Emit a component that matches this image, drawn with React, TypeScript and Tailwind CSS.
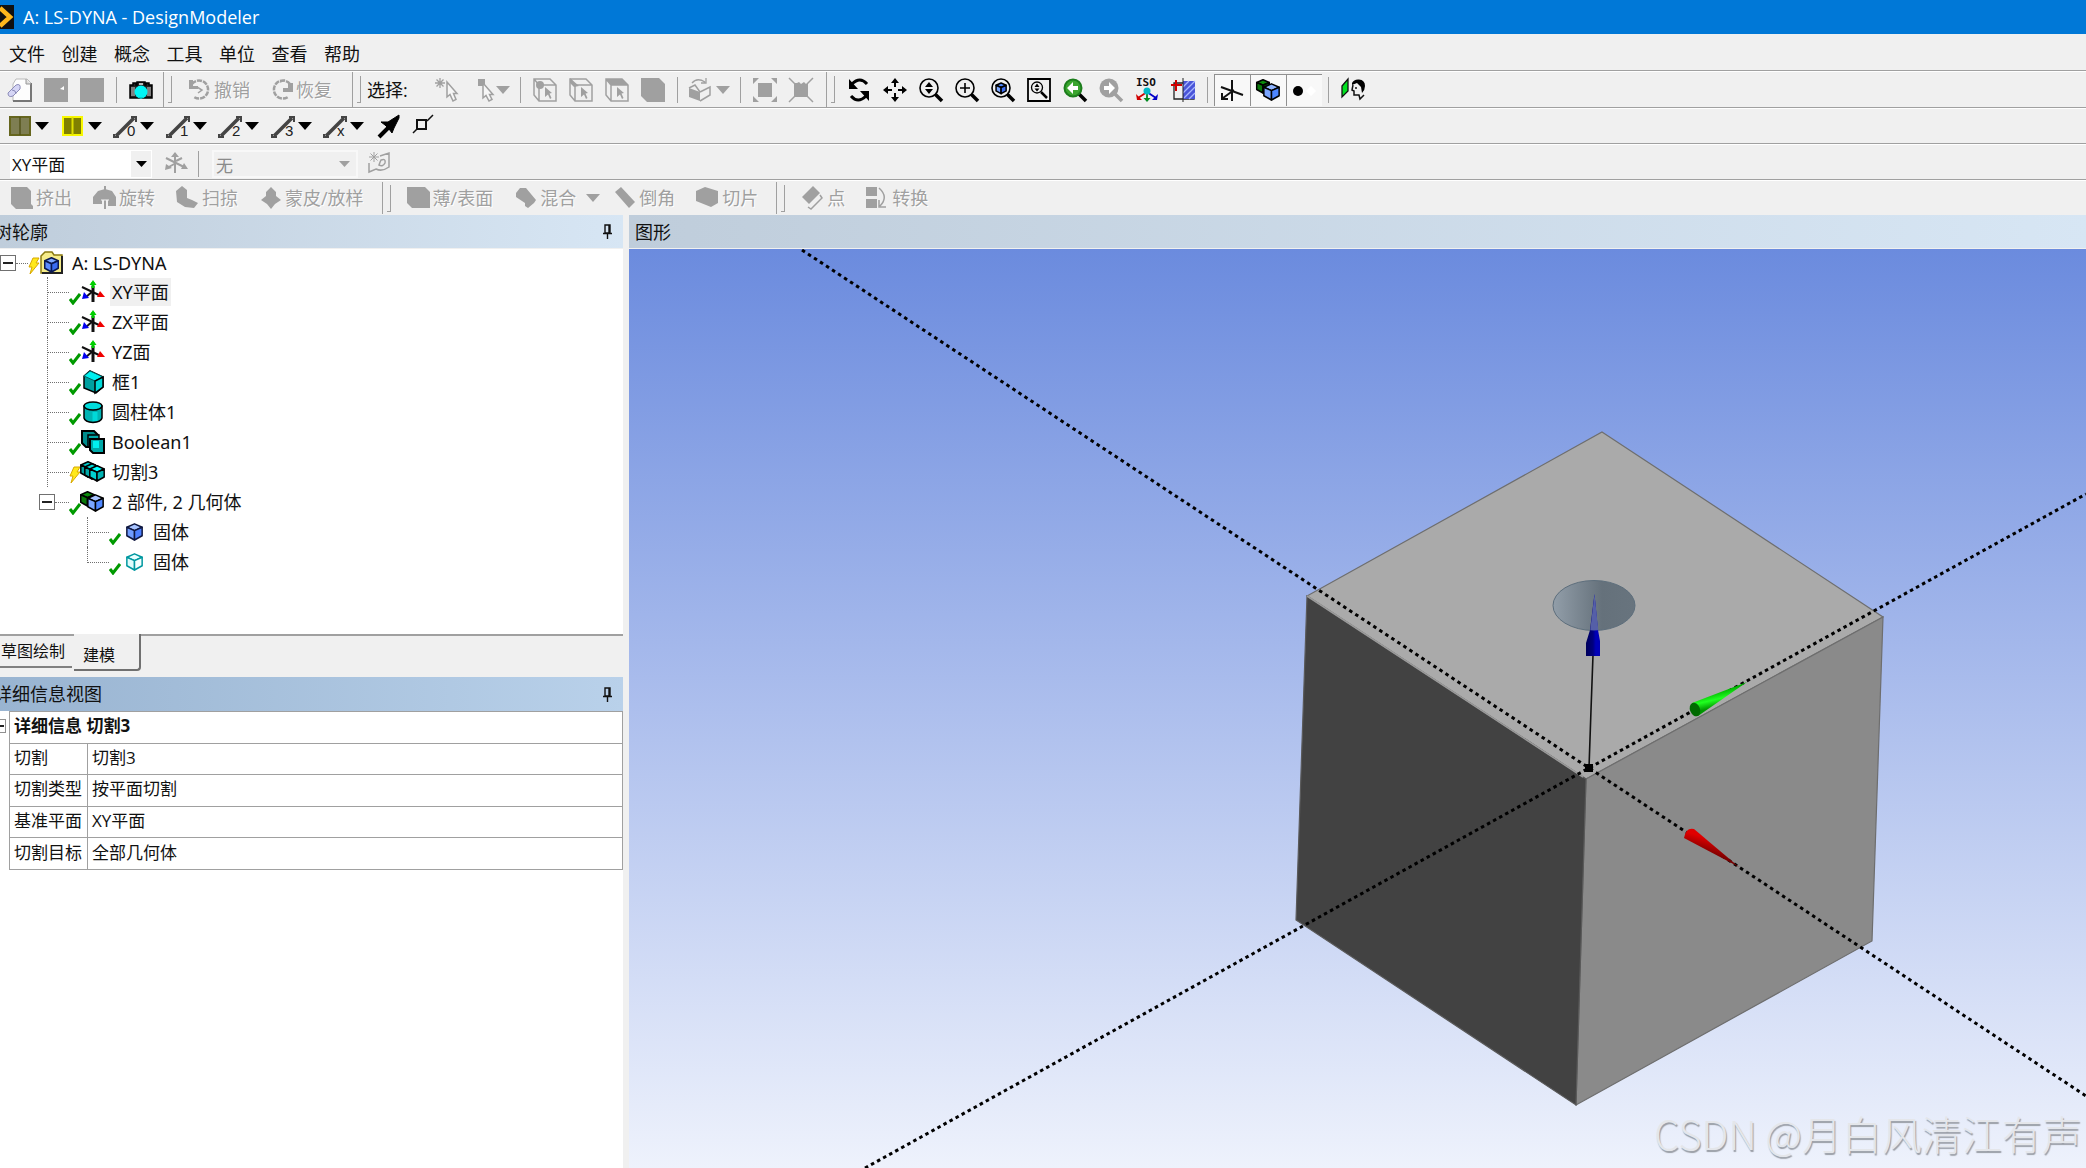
import React from "react";

type Kids = { children?: React.ReactNode };

function Icon({ children, w = 24 }: Kids & { w?: number }) {
  return (
    <svg width={w} height={24} viewBox={`0 0 ${w} 24`} fill="none" className="shrink-0 overflow-visible" aria-hidden="true">
      {children}
    </svg>
  );
}

function Caret({ color = "#000" }: { color?: string }) {
  return (
    <svg width={14} height={8} viewBox="0 0 14 8" className="shrink-0" aria-hidden="true">
      <path d="M0 0H14L7 8Z" fill={color} />
    </svg>
  );
}

function Sep() {
  return <div className="mx-1.5 h-[26px] w-px shrink-0 bg-[#a0a0a0]" />;
}

function Grip() {
  return <div className="ml-0.5 h-[27px] w-1 shrink-0 border-r border-b border-[#a0a0a0]" />;
}

function Tool({ label, on, children }: Kids & { label: string; on?: boolean }) {
  return (
    <button
      type="button"
      aria-label={label}
      className={
        on
          ? "flex h-8 w-9 shrink-0 items-center justify-center border-t border-l border-[#909090] bg-[#f8f8f8]"
          : "flex h-8 w-9 shrink-0 items-center justify-center"
      }
    >
      {children}
    </button>
  );
}

function TextTool({ text, caret, children }: Kids & { text: string; caret?: boolean }) {
  return (
    <button
      type="button"
      disabled
      className={
        caret
          ? "-mr-2 flex h-8 shrink-0 items-center gap-0.5 whitespace-nowrap text-[#a0a0a0]"
          : "flex h-8 shrink-0 items-center gap-0.5 whitespace-nowrap text-[#a0a0a0]"
      }
    >
      <Icon>{children}</Icon>
      <span className="[text-shadow:1px_1px_0_#fff]">{text}</span>
      {caret && (
        <span className="ml-2">
          <Caret color="#a0a0a0" />
        </span>
      )}
    </button>
  );
}

function Cube({ x = 0, y = 0, s = 1, top, left, right, line = "#000" }: { x?: number; y?: number; s?: number; top: string; left: string; right: string; line?: string }) {
  return (
    <g transform={`translate(${x} ${y}) scale(${s})`} stroke={line} strokeWidth={1.5 / s} strokeLinejoin="round">
      <path d="M10 1L19 5L10 9L1 5Z" fill={top} />
      <path d="M1 5L10 9V20L1 15Z" fill={left} />
      <path d="M19 5L10 9V20L19 15Z" fill={right} />
    </g>
  );
}

function Lens({ children, color = "#000", fill = "none" }: Kids & { color?: string; fill?: string }) {
  return (
    <Icon>
      <path d="M16.5 16.5L23 23" stroke={color} strokeWidth="3.5" />
      <circle cx="10" cy="10" r="9" stroke={color} strokeWidth="1.6" fill={fill} />
      {children}
    </Icon>
  );
}

const GRAY = "#a0a0a0";

function SelectCube({ mode }: { mode: "point" | "edge" | "face" }) {
  return (
    <Icon>
      <path d="M1 1H17L23 7V23H6L1 17ZM1 1L6 7H23M6 7V23" stroke={GRAY} strokeWidth="1.5" />
      {mode === "point" && <circle cx="7" cy="7" r="4" fill={GRAY} />}
      {mode === "edge" && <path d="M1 0L10 8L5 9L1 5Z" fill={GRAY} />}
      {mode === "face" && <path d="M1 1H17L23 7H6Z" fill={GRAY} />}
      <path d="M12 9L19 15L16.500 15.500L18.500 20L17 21L15 16.500L12 19Z" fill={GRAY} />
    </Icon>
  );
}

function MainToolbar() {
  return (
    <div role="toolbar" aria-label="标准" className="flex h-[37px] shrink-0 gap-0.5 border-t border-b border-t-white border-b-[#a0a0a0]">
      <div className="flex items-center border-r border-[#a0a0a0] pr-1 pl-0.5">
        <Tool label="新建">
          <Icon>
            <path d="M8 1H19L23 5V23H5V6Z" fill="#fdfdfd" stroke="#bbb" />
            <path d="M23 5V23H5" stroke="#777" strokeWidth="2" />
            <path d="M18 1V6H23" stroke="#999" fill="#ddd" />
            <path d="M0 15L8 7Q13 5 12 11L5 18Q0 20 0 15Z" fill="#d5d5f5" stroke="#8c8cb8" />
            <path d="M4 12Q8 12 8 16" stroke="#8c8cb8" />
          </Icon>
        </Tool>
        <Tool label="打开">
          <Icon>
            <path d="M0 0H24V24H0Z" fill={GRAY} />
            <path d="M16 11L20 8V12Z" fill="#fff" />
          </Icon>
        </Tool>
        <Tool label="保存">
          <Icon>
            <path d="M0 0H24V24H0Z" fill={GRAY} />
          </Icon>
        </Tool>
        <Sep />
        <Tool label="截图">
          <Icon>
            <path d="M1 7H4V5H7V7H8V4H16V7H17V5H20V7H23V20H1Z" fill="#222" stroke="#000" strokeWidth="1.500" />
            <path d="M3 9V18M5 9V18M19 9V18M21 9V18" stroke="#ddd" />
            <path d="M10 6H14" stroke="#eee" strokeWidth="1.500" />
            <circle cx="12" cy="14" r="6.500" fill="#00f5f5" />
            <path d="M12 21L9 19H15Z" fill="#00c8c8" />
          </Icon>
        </Tool>
      </div>
      <div className="flex items-center border-r border-[#a0a0a0] pr-5">
        <Grip />
        <div className="ml-4 flex items-center gap-5">
          <TextTool text="撤销">
            <path d="M4 6A9 9 0 1 1 6 19" stroke={GRAY} strokeWidth="2.500" strokeDasharray="5 1" />
            <path d="M1 2V11H10V8H5V2Z" fill={GRAY} />
            <path d="M9 9L14 12L10 15" stroke={GRAY} strokeWidth="1.500" />
          </TextTool>
          <TextTool text="恢复">
            <path d="M20 6A9 9 0 1 0 18 19" stroke={GRAY} strokeWidth="2.500" strokeDasharray="5 1" />
            <path d="M23 5V14H13V10H18V5Z" fill={GRAY} />
            <path d="M10 4L15 2" stroke={GRAY} strokeWidth="1.500" />
          </TextTool>
        </div>
      </div>
      <div className="flex items-center border-r border-[#a0a0a0] pr-[7px]">
        <Grip />
        <span className="ml-1.5 whitespace-nowrap">选择:</span>
        <button type="button" aria-label="新选择" className="ml-[27px]">
          <Icon>
            <path d="M5 0V10M0 5H10M1.500 1.500L8.500 8.500M8.500 1.500L1.500 8.500" stroke={GRAY} strokeWidth="1.300" />
            <path d="M12 4V19L15 16.500L18 23L21 21.500L18.500 15.500H22Z" stroke={GRAY} strokeWidth="1.500" fill="#f6f6f6" />
          </Icon>
        </button>
        <button type="button" aria-label="选择模式" className="ml-[19px] flex items-center">
          <Icon w={18}>
            <path d="M0 1H7V8H0Z" fill={GRAY} />
            <path d="M5 5V20L8 17.500L11 23L14 21.500L11.500 16.500H15Z" stroke={GRAY} strokeWidth="1.500" fill="#f6f6f6" />
          </Icon>
          <Caret color={GRAY} />
        </button>
        <div className="ml-1 flex items-center">
          <Sep />
          <Tool label="点">
            <SelectCube mode="point" />
          </Tool>
          <Tool label="边">
            <SelectCube mode="edge" />
          </Tool>
          <Tool label="面">
            <SelectCube mode="face" />
          </Tool>
          <Tool label="体">
            <Icon>
              <path d="M0 0H18L24 6V24H6L0 18Z" fill={GRAY} />
            </Icon>
          </Tool>
          <Sep />
          <button type="button" aria-label="扩展选择" className="flex h-8 w-[50px] items-center justify-center gap-1">
            <Icon>
              <path d="M1 10L12 14V23L1 19Z" fill={GRAY} />
              <path d="M1 10L7 7L12 14M12 14L22 9V17L12 23" stroke={GRAY} strokeWidth="1.500" />
              <path d="M4 5Q9 -1 17 4M18 0V5H13" stroke={GRAY} strokeWidth="1.300" />
            </Icon>
            <Caret color={GRAY} />
          </button>
          <Sep />
          <Tool label="扩大">
            <Icon>
              <path d="M5 5H19V19H5ZM0 0H6L0 6ZM24 0H18L24 6ZM0 24H6L0 18ZM24 24H18L24 18Z" fill={GRAY} />
            </Icon>
          </Tool>
          <Tool label="缩小">
            <Icon>
              <path d="M5 5H8L10 4L12 6L15 4L17 6H19V19H5Z" fill={GRAY} />
              <path d="M0 0L24 24M24 0L0 24" stroke={GRAY} strokeWidth="1.500" />
            </Icon>
          </Tool>
        </div>
      </div>
      <div className="flex items-center">
        <Grip />
        <div className="ml-1.5 flex items-center">
          <Tool label="旋转">
            <Icon>
              <path d="M5 6Q13 -2 20 6M19 18Q11 26 4 18" stroke="#000" strokeWidth="3" />
              <path d="M2 1V11H11ZM22 13V23L13 13Z" fill="#000" />
            </Icon>
          </Tool>
          <Tool label="平移">
            <Icon>
              <path d="M12 3V9M12 15V21M3 12H9M15 12H21" stroke="#000" strokeWidth="2" />
              <path d="M12 0L16 5H8ZM12 24L8 19H16ZM0 12L5 8V16ZM24 12L19 16V8Z" fill="#000" />
            </Icon>
          </Tool>
          <Tool label="缩放">
            <Lens>
              <path d="M10 4L14 9H6ZM10 16L6 11H14Z" fill="#000" />
            </Lens>
          </Tool>
          <Tool label="框缩放">
            <Lens>
              <path d="M10 5V15M5 10H15" stroke="#000" strokeWidth="1.600" />
            </Lens>
          </Tool>
          <Tool label="适合">
            <Lens>
              <Cube x={4.5} y={4.5} s={0.56} top="#4d86ff" left="#7da8ff" right="#3a6cf0" />
            </Lens>
          </Tool>
          <Tool label="放大镜窗口">
            <Icon>
              <path d="M1 1H23V23H1Z" stroke="#000" strokeWidth="1.800" />
              <circle cx="10" cy="9.500" r="5.500" stroke="#000" strokeWidth="1.300" />
              <path d="M14 14L20 20" stroke="#000" strokeWidth="2.500" />
              <path d="M10 5.500L12.500 9H7.500ZM10 13.500L7.500 10.500H12.500Z" fill="#000" />
            </Icon>
          </Tool>
          <Tool label="上一视图">
            <Icon>
              <path d="M16 16L23 23" stroke="#000" strokeWidth="3.500" />
              <circle cx="10" cy="10" r="8.500" fill="#3aa52e" stroke="#1c7d1c" strokeWidth="2" />
              <path d="M4 10L10 4V8H15V12H10V16Z" fill="#fff" />
            </Icon>
          </Tool>
          <Tool label="下一视图">
            <Icon>
              <path d="M16 16L23 23" stroke={GRAY} strokeWidth="3.500" />
              <circle cx="10" cy="10" r="9.500" fill={GRAY} />
              <path d="M16 10L10 4V8H5V12H10V16Z" fill="#fff" />
            </Icon>
          </Tool>
          <Tool label="等轴测视图">
            <Icon>
              <text x="1" y="8" fontSize="11" fontFamily="DejaVu Sans Mono" fontWeight="bold" fill="#111">
                ISO
              </text>
              <path d="M12 14L3 20" stroke="#d00000" strokeWidth="1.800" />
              <path d="M1 16L2 22H7Z" fill="#d00000" />
              <path d="M12 14L21 20" stroke="#0000c8" strokeWidth="1.800" />
              <path d="M23 16L22 22H17Z" fill="#0000c8" />
              <path d="M12 14V22" stroke="#008a20" strokeWidth="1.800" />
              <path d="M12 24L8.500 20H15.500Z" fill="#008a20" />
              <circle cx="12" cy="13" r="3.500" fill="#00b8c8" />
            </Icon>
          </Tool>
          <Tool label="正视于">
            <Icon>
              <path d="M3 5H23V21H3Z" stroke="#222" strokeWidth="1.300" />
              <path d="M12 3H24V21H12Z" fill="#4a55d8" />
              <path d="M12 9L18 3M12 15L24 3M13 20L24 9M18 21L24 15" stroke="#a9b6ff" strokeWidth="1.300" />
              <path d="M12 0V24" stroke="#222" />
              <path d="M5 2V13M0 7H11" stroke="#d00000" strokeWidth="2" />
            </Icon>
          </Tool>
          <Sep />
          <Tool label="显示平面" on>
            <Icon>
              <path d="M12 2V23M1 9L23 17M14 12L3 20M2 15V21H8" stroke="#111" strokeWidth="2" />
            </Icon>
          </Tool>
          <Tool label="显示模型" on>
            <Icon>
              <Cube x={0} y={1} s={0.7} top="#0a8a0a" left="#0a780a" right="#055005" />
              <Cube x={7} y={5} s={0.85} top="#8fb4ff" left="#7ba6ff" right="#4d86ff" />
            </Icon>
          </Tool>
          <Tool label="显示点" on>
            <Icon>
              <circle cx="6" cy="13" r="5" fill="#000" />
              <path d="M19 8L24 13L19 18L14 13Z" fill="#fff" />
            </Icon>
          </Tool>
          <Sep />
          <Tool label="查看面">
            <Icon>
              <path d="M1 8L7 1V13L1 19Z" fill="#00e020" stroke="#111" strokeWidth="1.300" />
              <path d="M11 5Q13 1 18 1.500Q24 2 24 8Q24 12 21 15L20 9L16 5L11 7Z" fill="#000" />
              <path d="M12 7L11 12L13 13V17H18L19 21L23 17M14 10H16" stroke="#111" strokeWidth="1.500" />
            </Icon>
          </Tool>
        </div>
      </div>
    </div>
  );
}

const lineTools = ["0", "1", "2", "3", "x"];

function LineToolbar() {
  return (
    <div role="toolbar" aria-label="边着色" className="flex h-9 shrink-0 items-center border-t border-b border-t-white border-b-[#a0a0a0] pl-[9px]">
      <div className="flex w-[368px]">
        <button type="button" aria-label="面着色" className="flex flex-1 items-center gap-0.5">
          <Icon>
            <path d="M1 3H21V21H1Z" fill="#7e7e52" stroke="#66661e" strokeWidth="2" />
            <path d="M11 3V21" stroke="#55551a" strokeWidth="1.500" />
          </Icon>
          <Caret />
        </button>
        <button type="button" aria-label="部件着色" className="flex flex-1 items-center gap-0.5">
          <Icon>
            <path d="M1 3H20V21H1Z" fill="#808000" stroke="#f8f800" strokeWidth="2" />
            <path d="M10.500 3V21" stroke="#e0e000" strokeWidth="2" />
          </Icon>
          <Caret />
        </button>
        {lineTools.map((n) => (
          <button type="button" key={n} aria-label={`边 ${n}`} className="flex flex-1 items-center gap-0.5">
            <Icon>
              <path d="M2 22L20 4" stroke="#444" strokeWidth="3.500" />
              <path d="M17 3H22V8M0 20V23H5" stroke="#444" strokeWidth="2" />
              <text x="13" y="22" fontSize="15" fontFamily="Liberation Sans" fill="#222">
                {n}
              </text>
            </Icon>
            <Caret />
          </button>
        ))}
      </div>
      <div className="flex gap-3">
        <button type="button" aria-label="边方向">
          <Icon>
            <path d="M2 23L12 13" stroke="#000" strokeWidth="4" />
            <path d="M4 8H11L22 1V4L17 14L15 19L12 15L8 11Z" fill="#000" stroke="#000" />
          </Icon>
        </button>
        <button type="button" aria-label="显示顶点">
          <Icon>
            <path d="M4 6H13V15H4Z" stroke="#111" strokeWidth="2" />
            <path d="M14 7L20 1M4 15L0 19" stroke="#111" strokeWidth="1.500" />
          </Icon>
        </button>
      </div>
    </div>
  );
}

function PlaneToolbar() {
  return (
    <div role="toolbar" aria-label="平面" className="flex h-9 shrink-0 items-center border-t border-b border-t-white border-b-[#a0a0a0] pt-[3px] pl-2.5">
      <div className="relative flex h-7 w-[142px] items-center bg-white">
        <select aria-label="平面" className="h-full w-full appearance-none border border-white bg-white pl-px text-[17px] outline-none">
          <option>XY平面</option>
        </select>
        <span className="pointer-events-none absolute inset-y-px right-px flex w-5 items-center justify-center bg-[#f0f0f0]">
          <svg width="11" height="6" viewBox="0 0 11 6" aria-hidden="true">
            <path d="M0 0H11L5.500 6Z" fill="#000" />
          </svg>
        </span>
      </div>
      <button type="button" aria-label="新平面" className="ml-3">
        <Icon>
          <path d="M11 1V21M2 6L22 16M12 11L3 16M12 9L18 6" stroke={GRAY} strokeWidth="2" />
          <path d="M11 0L15 5H7ZM1 18L2 12L8 16ZM24 17L17 17L20 11Z" fill={GRAY} />
        </Icon>
      </button>
      <div className="ml-1">
        <Sep />
      </div>
      <div className="relative ml-[7px] flex h-7 w-[146px] items-center">
        <select aria-label="草图" disabled className="h-full w-full appearance-none border-2 border-[#f8f8f8] bg-[#f0f0f0] pl-0.5 text-[17px] text-[#8a8a8a] opacity-100">
          <option>无</option>
        </select>
        <svg width="11" height="6" viewBox="0 0 11 6" className="pointer-events-none absolute right-2" aria-hidden="true">
          <path d="M0 0H11L5.500 6Z" fill={GRAY} />
        </svg>
      </div>
      <button type="button" aria-label="新草图" className="ml-2.5">
        <Icon>
          <path d="M6 0V10M1 5H11M2.500 1.500L9.500 8.500M9.500 1.500L2.500 8.500" stroke={GRAY} />
          <path d="M1 11V20L8 17Q14 20 21 15V1L12 4M13 8Q18 6 17 11Q15 15 11 13Q12 10 13 8Z" stroke={GRAY} strokeWidth="1.500" />
        </Icon>
      </button>
    </div>
  );
}

function FeatureToolbar() {
  return (
    <div role="toolbar" aria-label="特征" className="flex h-[35px] shrink-0 items-center gap-0.5 border-t border-white">
      <div className="flex h-8 items-center gap-[21px] border-r border-[#a0a0a0] pr-[18px] pl-2.5">
        <TextTool text="挤出">
          <path d="M1 1H17L21 5V18L23 20V23H6L1 18Z" fill={GRAY} />
        </TextTool>
        <TextTool text="旋转">
          <path d="M0 18V11L5 5L12 3L19 5L23 11V20H15V14H9V18Z" fill={GRAY} />
          <path d="M12 0V23" stroke={GRAY} strokeWidth="2" />
          <path d="M8 14H16" stroke="#f0f0f0" />
        </TextTool>
        <TextTool text="扫掠">
          <path d="M0 5L6 0L11 4V12L16 14L22 17L18 22L9 21L1 16Z" fill={GRAY} />
        </TextTool>
        <TextTool text="蒙皮/放样">
          <path d="M12 1L17 6V10L22 14L16 18L12 23L8 18L2 14L7 10V6Z" fill={GRAY} />
        </TextTool>
      </div>
      <div className="flex h-8 items-center border-r border-[#a0a0a0] pr-[18px]">
        <Grip />
        <div className="ml-4 flex items-center gap-[21px]">
          <TextTool text="薄/表面">
            <path d="M0 1H18L23 6V22H5L0 17Z" fill={GRAY} />
          </TextTool>
          <TextTool text="混合" caret>
            <path d="M2 7L6 2H12L22 14L20 17L14 22L11 20V17L2 11Z" fill={GRAY} />
          </TextTool>
          <TextTool text="倒角">
            <path d="M2 6L8 1L22 16L16 22Z" fill={GRAY} />
          </TextTool>
          <TextTool text="切片">
            <path d="M0 5L9 1L22 5V17L15 21L0 15Z" fill={GRAY} />
          </TextTool>
        </div>
      </div>
      <div className="flex items-center">
        <Grip />
        <div className="ml-4 flex items-center gap-[21px]">
          <TextTool text="点">
            <path d="M1 11L12 0L19 7L8 18Z" fill={GRAY} />
            <path d="M7 21L10 23L21 12L19 9" stroke={GRAY} strokeWidth="1.500" />
          </TextTool>
          <TextTool text="转换">
            <path d="M0 1H11V10H0ZM0 13H11V22H0Z" fill={GRAY} />
            <path d="M13 2Q23 11 14 20M13 14V21H20" stroke={GRAY} strokeWidth="1.500" />
          </TextTool>
        </div>
      </div>
    </div>
  );
}

function AxisIcon() {
  return (
    <Icon>
      <path d="M1 7L20 16M12 11L5 17" stroke="#111" strokeWidth="2" />
      <path d="M12 6V22" stroke="#111" strokeWidth="3" />
      <path d="M12 2V8" stroke="#00c800" strokeWidth="3" />
      <path d="M12 0L15.500 5H8.500Z" fill="#00d000" />
      <path d="M1 19L3 12L8 18Z" fill="#0000f0" />
      <path d="M24 17L16 17L19 11Z" fill="#f00000" />
    </Icon>
  );
}

const treeIcons: Record<string, React.ReactNode> = {
  axis: <AxisIcon />,
  box: (
    <Icon>
      <path d="M9 1L22 7V17L15 23L3 18V6Z" fill="#00a0a0" stroke="#000" strokeWidth="1.500" />
      <path d="M9 1L22 7L14 11L3 6Z" fill="#00f0f0" stroke="#006060" />
      <path d="M14 11V23L22 17V7Z" fill="#00d8d8" stroke="#000" strokeWidth="1.500" />
    </Icon>
  ),
  cylinder: (
    <Icon>
      <path d="M3 6V18Q4 22 12 22.500Q20 22 21 18V6Z" fill="#00b4b4" stroke="#000" strokeWidth="1.500" />
      <ellipse cx="12" cy="6" rx="9" ry="4" fill="#00dcdc" stroke="#000" strokeWidth="1.500" />
      <path d="M14 12V21" stroke="#00d8d8" strokeWidth="5" />
    </Icon>
  ),
  boolean: (
    <Icon>
      <path d="M1 1H13L17 5V17H5L1 13Z" fill="#008c8c" stroke="#000" strokeWidth="2" />
      <path d="M7 5H18V17H7Z" fill="#00a8a8" stroke="#000" strokeWidth="1.500" />
      <path d="M9 9H23V23H12L9 20Z" fill="#00a8a8" stroke="#000" strokeWidth="2" />
      <path d="M12 11H18V18H12Z" fill="#00f0f0" />
    </Icon>
  ),
  slice: (
    <Icon>
      <Cube x={-1} y={1} s={0.8} top="#00c8c8" left="#00a0a0" right="#008080" />
      <Cube x={3} y={3} s={0.8} top="#00d8d8" left="#00a8a8" right="#009090" />
      <Cube x={8} y={5} s={0.8} top="#00ffff" left="#00d0d0" right="#00b4b4" />
    </Icon>
  ),
  parts: (
    <Icon>
      <Cube x={-1} y={1} s={0.75} top="#0a8a0a" left="#0a780a" right="#044404" />
      <Cube x={6} y={4} s={0.85} top="#a8c4ff" left="#7ba6ff" right="#5088ff" />
    </Icon>
  ),
  solid: (
    <Icon>
      <Cube x={3} y={3} s={0.85} top="#a8c4ff" left="#6f9cff" right="#4d80ff" line="#101840" />
    </Icon>
  ),
  hollow: (
    <Icon>
      <Cube x={3} y={3} s={0.85} top="#e8ffff" left="#dffcfc" right="#f4ffff" line="#0098a0" />
    </Icon>
  ),
};

function Check() {
  return (
    <svg width="12" height="12" viewBox="0 0 12 12" className="mt-3.5 shrink-0" aria-label="完成">
      <path d="M1 6L4 10L11 1" stroke="#009a00" strokeWidth="3" fill="none" />
    </svg>
  );
}

function Bolt() {
  return (
    <svg width="12" height="18" viewBox="0 0 12 18" className="mt-1.5 shrink-0" aria-label="需要更新">
      <path d="M5 1H11L8 6H11L2 17L4 10H1Z" fill="#ffe81a" stroke="#d8a800" />
    </svg>
  );
}

function Toggle() {
  return (
    <button type="button" aria-label="折叠" className="flex size-4 shrink-0 items-center justify-center border border-[#707070] bg-white">
      <span className="h-0.5 w-2.5 bg-[#222]" />
    </button>
  );
}

const features = [
  { name: "XY平面", icon: "axis", selected: true },
  { name: "ZX平面", icon: "axis" },
  { name: "YZ面", icon: "axis" },
  { name: "框1", icon: "box" },
  { name: "圆柱体1", icon: "cylinder" },
  { name: "Boolean1", icon: "boolean" },
  { name: "切割3", icon: "slice", stale: true },
];

const bodies = [
  { name: "固体", icon: "solid" },
  { name: "固体", icon: "hollow" },
];

function Tree() {
  return (
    <ul role="tree" aria-label="树轮廓" className="h-[385px] shrink-0 overflow-hidden bg-white font-['Noto_Sans','Noto_Sans_CJK_SC',sans-serif]">
      <li role="treeitem" className="flex h-7 items-center whitespace-nowrap">
        <Toggle />
        <span className="w-3 border-t border-dotted border-[#707070]" />
        <Bolt />
        <Icon>
          <path d="M1 5L5 1H12L14 4H22V22H1Z" fill="#f5ec8a" stroke="#8a7a10" strokeWidth="1.500" />
          <path d="M22 5V22H2" stroke="#222" strokeWidth="2" />
          <Cube x={4} y={6} s={0.75} top="#7ba6ff" left="#5c8cff" right="#3a6cf0" line="#0a1850" />
        </Icon>
        <span className="ml-2">A: LS-DYNA</span>
      </li>
      {features.map((f) => (
        <li role="treeitem" key={f.name} className="flex h-[30px] items-center pl-[47px] whitespace-nowrap">
          <span className="flex w-[22px] items-center self-stretch border-l border-dotted border-[#707070]">
            <span className="w-full border-t border-dotted border-[#707070]" />
          </span>
          {f.stale ? <Bolt /> : <Check />}
          {treeIcons[f.icon]}
          <span className={f.selected ? "ml-[5px] bg-[#f0f0f0] px-0.5" : "ml-[5px] px-0.5"}>{f.name}</span>
        </li>
      ))}
      <li role="treeitem" className="flex h-[30px] items-center pl-[39px] whitespace-nowrap">
        <Toggle />
        <span className="w-3.5 border-t border-dotted border-[#707070]" />
        <Check />
        {treeIcons.parts}
        <span className="ml-[5px] px-0.5">2 部件, 2 几何体</span>
      </li>
      {bodies.map((b, i) => (
        <li role="treeitem" key={b.icon} className="flex h-[30px] items-center pl-[87px] whitespace-nowrap">
          <span className="flex w-[22px] self-stretch">
            <span className={i === bodies.length - 1 ? "h-4 w-full border-b border-l border-dotted border-[#707070]" : "flex h-full w-full items-center border-l border-dotted border-[#707070]"}>
              {i < bodies.length - 1 && <span className="w-full border-t border-dotted border-[#707070]" />}
            </span>
          </span>
          <Check />
          <span className="ml-0.5">{treeIcons[b.icon]}</span>
          <span className="ml-1 px-0.5">{b.name}</span>
        </li>
      ))}
    </ul>
  );
}

function Pin() {
  return (
    <button type="button" aria-label="自动隐藏" className="mr-2.5">
      <svg width="11" height="15" viewBox="0 0 11 15" fill="none" aria-hidden="true">
        <path d="M3 1H8V9H3ZM7 1V9M1 9.500H10M5.500 10V15" stroke="#111" strokeWidth="1.400" />
      </svg>
    </button>
  );
}

const details = [
  ["切割", "切割3"],
  ["切割类型", "按平面切割"],
  ["基准平面", "XY平面"],
  ["切割目标", "全部几何体"],
];

function Details() {
  return (
    <div className="flex flex-1 bg-white">
      <div className="w-[9px] shrink-0 overflow-hidden">
        <button type="button" aria-label="折叠" className="mt-2 flex h-3.5 w-1.5 items-center border border-l-0 border-[#909090]">
          <span className="h-0.5 w-1 bg-[#222]" />
        </button>
      </div>
      <table className="h-[159px] flex-1 table-fixed border-collapse self-start text-[17px] leading-5">
        <colgroup>
          <col className="w-[78px]" />
          <col />
        </colgroup>
        <tbody>
          <tr>
            <th colSpan={2} className="border border-[#a0a0a0] px-1 pt-0 pb-0.5 text-left font-bold">
              详细信息 切割3
            </th>
          </tr>
          {details.map(([k, v]) => (
            <tr key={k}>
              <th scope="row" className="border border-[#a0a0a0] px-1 pt-0 pb-0.5 text-left font-normal whitespace-nowrap">
                {k}
              </th>
              <td className="border border-[#a0a0a0] px-1 pt-0 pb-0.5">{v}</td>
            </tr>
          ))}
        </tbody>
      </table>
    </div>
  );
}

function Scene() {
  return (
    <svg viewBox="629 249 1457 919" preserveAspectRatio="xMidYMid slice" className="absolute inset-0 h-full w-full" role="img" aria-label="模型">
      <defs>
        <linearGradient id="sky" x1="0" y1="0" x2="0" y2="1">
          <stop offset="0" stopColor="#6b8bde" />
          <stop offset="1" stopColor="#eef2fc" />
        </linearGradient>
        <linearGradient id="hole">
          <stop offset="0" stopColor="#929ea9" />
          <stop offset="0.600" stopColor="#65717b" />
          <stop offset="1" stopColor="#68747e" />
        </linearGradient>
        <linearGradient id="blue">
          <stop offset="0" stopColor="#00005a" />
          <stop offset="0.500" stopColor="#000080" />
          <stop offset="0.700" stopColor="#0000b8" />
        </linearGradient>
        <linearGradient id="green" x1="0.400" y1="0.300" x2="0.550" y2="0.700">
          <stop offset="0" stopColor="#00b400" />
          <stop offset="0.500" stopColor="#20ff20" />
          <stop offset="1" stopColor="#009600" />
        </linearGradient>
        <linearGradient id="red" x1="0.550" y1="0.300" x2="0.400" y2="0.650">
          <stop offset="0" stopColor="#e00000" />
          <stop offset="1" stopColor="#780000" />
        </linearGradient>
        <clipPath id="holeClip">
          <ellipse cx="1594" cy="605.500" rx="41" ry="25" />
        </clipPath>
      </defs>
      <rect x="629" y="249" width="1457" height="919" fill="url(#sky)" />
      <g strokeWidth="1.200" stroke="#6e6e6e">
        <path d="M1602 432L1883 617L1586 779L1307 596Z" fill="#aaaaaa" />
        <path d="M1883 617L1872 941L1576 1105L1586 779Z" fill="#8a8a8a" />
        <path d="M1307 596L1586 779L1576 1105L1296 920Z" fill="#424242" stroke="#5a5a5a" />
      </g>
      <path d="M1307 596L1583 777" stroke="#9a9a9a" strokeWidth="1.500" fill="none" />
      <ellipse cx="1594" cy="605.500" rx="41" ry="25" fill="url(#hole)" stroke="#5d6e7c" />
      <g stroke="#000" strokeWidth="3" fill="none">
        <path d="M802 250L1589 768L2086 1096" strokeDasharray="3.500 3.700" />
        <path d="M865 1168L1589 768L2086 494" strokeDasharray="3.500 3.400" />
      </g>
      <path d="M1593 655L1591 710L1589 768" stroke="#111" strokeWidth="1.600" fill="none" />
      <path d="M1585 764H1593V772H1585Z" fill="#000" />
      <path d="M1594.500 594L1598 630L1600 641V656H1586V643L1590 630Z" fill="url(#blue)" />
      <path d="M1594.500 594L1598.500 632H1590Z" fill="#555fa8" clipPath="url(#holeClip)" />
      <path d="M1747 682L1692 703Q1689 711 1698 716Z" fill="url(#green)" />
      <ellipse cx="1695" cy="709.500" rx="5" ry="7" transform="rotate(-22 1695 709.500)" fill="#006a00" />
      <path d="M1739 867L1694 829Q1686 827 1684 838Z" fill="url(#red)" />
    </svg>
  );
}

const menus = ["文件", "创建", "概念", "工具", "单位", "查看", "帮助"];

export default function App() {
  return (
    <div className="flex h-screen flex-col overflow-hidden bg-[#f0f0f0] font-['Open_Sans','Noto_Sans_CJK_SC',sans-serif] text-lg leading-7 text-[#111]">
      <header className="flex h-[34px] shrink-0 items-center bg-[#0078d7] text-white">
        <svg width="14" height="24" viewBox="0 0 14 24" aria-hidden="true">
          <path d="M0 0H14V24H0Z" fill="#111" />
          <path d="M0 3L10 12L0 21" stroke="#ffb81c" strokeWidth="4.500" fill="none" />
        </svg>
        <h1 className="ml-[9px]">A: LS-DYNA - DesignModeler</h1>
      </header>
      <nav className="flex h-[37px] shrink-0 items-center border-b border-[#a0a0a0] px-[9px] pt-1">
        <div className="flex w-[351px] justify-between">
          {menus.map((m) => (
            <button type="button" key={m}>
              {m}
            </button>
          ))}
        </div>
      </nav>
      <MainToolbar />
      <LineToolbar />
      <PlaneToolbar />
      <FeatureToolbar />
      <div className="flex min-h-0 flex-1 gap-1.5">
        <aside className="flex w-[623px] shrink-0 flex-col overflow-hidden">
          <div className="flex h-[34px] shrink-0 items-center justify-between border-b border-[#f0f0f0] bg-linear-to-r from-[#bfcddb] to-[#d7e6f4]">
            <h2 className="-ml-1.5">树轮廓</h2>
            <Pin />
          </div>
          <Tree />
          <div role="tablist" className="flex h-[43px] shrink-0 items-start border-t-2 border-[#a0a0a0] text-base leading-7">
            <button role="tab" type="button" aria-selected="false" className="h-8 w-[72px] border-b-2 border-[#808080] pl-px text-left whitespace-nowrap">
              草图绘制
            </button>
            <button role="tab" type="button" aria-selected="true" className="-mt-0.5 ml-0.5 h-[37px] w-[67px] rounded-br-sm border-r-2 border-b-2 border-[#707070] bg-[#f0f0f0] pt-1.5 pl-[9px] text-left">
              建模
            </button>
          </div>
          <div className="flex h-[34px] shrink-0 items-center justify-between bg-linear-to-r from-[#99b4d1] to-[#b9d1ea]">
            <h2 className="-ml-1.5">详细信息视图</h2>
            <Pin />
          </div>
          <Details />
        </aside>
        <main className="flex min-w-0 flex-1 flex-col">
          <div className="flex h-[34px] shrink-0 items-center border-b border-[#f0f0f0] bg-linear-to-r from-[#bfcddb] to-[#d7e6f4] px-1.5">
            <h2>图形</h2>
          </div>
          <div className="relative flex-1 overflow-hidden">
            <Scene />
            <p className="absolute right-1 bottom-2.5 font-['Noto_Sans_CJK_SC',sans-serif] text-[40px] leading-[50px] font-light whitespace-nowrap text-[#e4e6ea] [text-shadow:1px_2px_1px_#9a9ea6]">
              CSDN @月白风清江有声
            </p>
          </div>
        </main>
      </div>
    </div>
  );
}
